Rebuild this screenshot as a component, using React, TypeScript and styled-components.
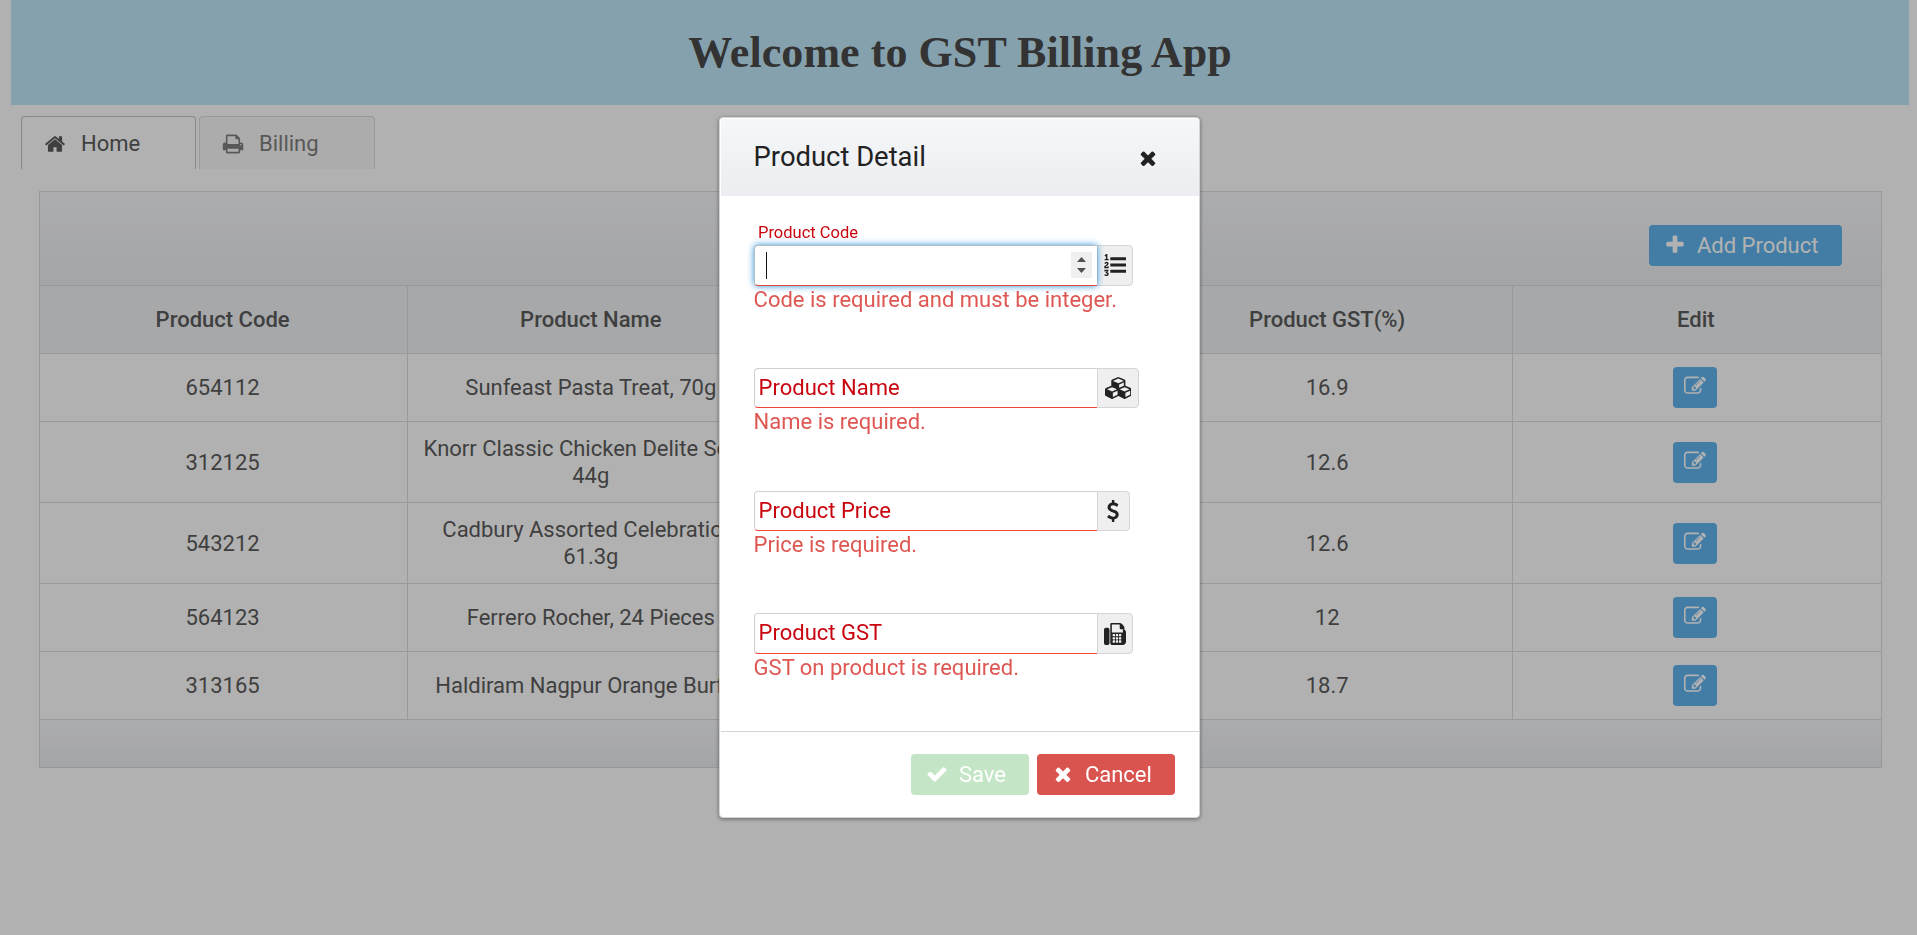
import React from "react";
import styled, { createGlobalStyle, css } from "styled-components";

const GlobalStyle = createGlobalStyle`
  *, *::before, *::after { box-sizing: border-box; }
  html, body { margin: 0; height: 100%; overflow: hidden; background: #fefefe; }
  body { font-family: Roboto, "Liberation Sans", sans-serif; font-size: 22px; line-height: 27px; color: #5b5b5b; }
  button, input { font: inherit; letter-spacing: inherit; margin: 0; }
`;

/* ---------- icons ---------- */

const faxKeys = [768, 1024, 1280]
  .map((x) =>
    [896, 1152, 1408]
      .map((y) => `M${x - 32} ${y}h128q32 0 32 32v128q0 32-32 32h-128q-32 0-32-32v-128q0-32 32-32z`)
      .join("")
  )
  .join("");

const icons = {
  home: {
    width: 1792,
    d: "M1472 992v480q0 26-19 45t-45 19h-384v-384h-256v384h-384q-26 0-45-19t-19-45v-480q0-1 .5-3t.5-3l575-474 575 474q1 2 1 6zm223-69l-62 74q-8 9-21 11h-3q-13 0-21-7l-692-577-692 577q-12 8-24 7-13-2-21-11l-62-74q-8-10-7-23.5t11-21.5l719-599q32-26 76-26t76 26l244 204v-195q0-14 9-23t23-9h192q14 0 23 9t9 23v408l219 182q10 8 11 21.5t-7 23.5z",
  },
  print: {
    width: 1792,
    d: "M448 1536h896v-256h-896v256zm0-640h896v-384h-160q-40 0-68-28t-28-68v-160h-640v640zm1152 64q0-26-19-45t-45-19-45 19-19 45 19 45 45 19 45-19 19-45zm128 0v416q0 13-9.5 22.5t-22.5 9.5h-224v160q0 40-28 68t-68 28h-960q-40 0-68-28t-28-68v-160h-224q-13 0-22.5-9.5t-9.5-22.5v-416q0-79 56.5-135.5t135.5-56.5h64v-544q0-40 28-68t68-28h672q40 0 88 20t76 48l152 152q28 28 48 76t20 88v256h64q79 0 135.5 56.5t56.5 135.5z",
  },
  plus: {
    width: 1792,
    d: "M1600 736v192q0 40-28 68t-68 28h-416v416q0 40-28 68t-68 28h-192q-40 0-68-28t-28-68v-416h-416q-40 0-68-28t-28-68v-192q0-40 28-68t68-28h416v-416q0-40 28-68t68-28h192q40 0 68 28t28 68v416h416q40 0 68 28t28 68z",
  },
  edit: {
    width: 1792,
    d: "M888 1184l116-116-152-152-116 116v56h96v96h56zm440-720q-16-16-33 1l-350 350q-17 17-1 33t33-1l350-350q17-17 1-33zm80 594v190q0 119-84.5 203.5t-203.5 84.5h-832q-119 0-203.5-84.5t-84.5-203.5v-832q0-119 84.5-203.5t203.5-84.5h832q63 0 117 25 15 7 18 23 3 17-9 29l-49 49q-14 14-32 8-23-6-45-6h-832q-66 0-113 47t-47 113v832q0 66 47 113t113 47h832q66 0 113-47t47-113v-126q0-13 9-22l64-64q15-15 35-7t20 29zm-96-738l288 288-672 672h-288v-288zm444 132l-92 92-288-288 92-92q28-28 68-28t68 28l152 152q28 28 28 68t-28 68z",
  },
  check: {
    width: 1792,
    d: "M1671 566q0 40-28 68l-724 724-136 136q-28 28-68 28t-68-28l-136-136-362-362q-28-28-28-68t28-68l136-136q28-28 68-28t68 28l294 295 656-657q28-28 68-28t68 28l136 136q28 28 28 68z",
  },
  close: {
    width: 1792,
    d: "M1490 1322q0 40-28 68l-136 136q-28 28-68 28t-68-28l-294-294-294 294q-28 28-68 28t-68-28l-136-136q-28-28-28-68t28-68l294-294-294-294q-28-28-28-68t28-68l136-136q28-28 68-28t68 28l294 294 294-294q28-28 68-28t68 28l136 136q28 28 28 68t-28 68l-294 294 294 294q28 28 28 68z",
  },
  listOl: {
    width: 1792,
    d: "M381 1620q0 80-54.5 126t-135.5 46q-106 0-172-66l57-88q49 45 106 45 29 0 50.5-14.5t21.5-42.5q0-64-105-56l-26-56q8-10 32.5-43.5t42.5-54 37-38.5v-1q-16 0-48.5 1t-48.5 1v53h-106v-152h333v88l-95 115q51 12 81 49t30 88zm2-627v159h-362q-6-36-6-54 0-51 23.5-93t56.5-68 66-47.5 56.5-43.5 23.5-45q0-25-14.5-38.5t-39.5-13.5q-46 0-81 58l-85-59q24-51 71.5-79.5t105.5-28.5q73 0 123 41.5t50 112.5q0 50-34 91.5t-75 64.5-75.5 50.5-35.5 52.5h127v-60h105zm1409 319v192q0 13-9.5 22.5t-22.5 9.5h-1216q-13 0-22.5-9.5t-9.5-22.5v-192q0-14 9-23t23-9h1216q13 0 22.5 9.5t9.5 22.5zm-1408-899v99h-335v-99h107q0-41 .5-121.5t.5-121.5v-12h-2q-8 17-50 54l-71-76 136-127h106v404h108zm1408 387v192q0 13-9.5 22.5t-22.5 9.5h-1216q-13 0-22.5-9.5t-9.5-22.5v-192q0-14 9-23t23-9h1216q13 0 22.5 9.5t9.5 22.5zm0-512v192q0 13-9.5 22.5t-22.5 9.5h-1216q-13 0-22.5-9.5t-9.5-22.5v-192q0-13 9.5-22.5t22.5-9.5h1216q13 0 22.5 9.5t9.5 22.5z",
  },
  cubes: {
    width: 2176,
    d: "M640 1632l384-192v-314l-384 164v342zm-64-454l404-173-404-173-404 173zm1088 454l384-192v-314l-384 164v342zm-64-454l404-173-404-173-404 173zm-448-293l384-165v-266l-384 164v267zm-64-379l441-189-441-189-441 189zm1088 518v416q0 36-19 67t-52 47l-448 224q-25 14-57 14t-57-14l-448-224q-5-2-7-4-2 2-7 4l-448 224q-25 14-57 14t-57-14l-448-224q-33-16-52-47t-19-67v-416q0-38 21.5-70t56.5-48l434-186v-400q0-38 21.5-70t56.5-48l448-192q23-10 50-10t50 10l448 192q35 16 56.5 48t21.5 70v400l434 186q36 16 57 48t21 70z",
  },
  dollar: {
    width: 1792,
    d: "M1362 1185q0 153-99.5 263.5t-258.5 136.5v175q0 14-9 23t-23 9h-135q-13 0-22.5-9.5t-9.5-22.5v-175q-66-9-127.5-31t-101.5-44.5-74-48-46.5-37.5-17.5-18q-17-21-2-41l103-135q7-10 23-12 15-2 24 9l2 2q113 99 243 125 37 8 74 8 81 0 142.5-43t61.5-122q0-28-15-53t-33.5-42-58.5-37.5-66-32-80-32.5q-39-16-61.5-25t-61.5-26.5-62.5-31-56.5-35.5-53.5-42.5-43.5-49-35.5-58-21-66.5-8.5-78q0-138 98-242t255-134v-180q0-13 9.5-22.5t22.5-9.5h135q14 0 23 9t9 23v176q57 6 110.5 23t87 33.5 63.5 37.5 39 29 15 14q17 18 5 38l-81 146q-8 15-23 16-14 3-27-7-3-3-14.5-12t-39-26.5-58.5-32-74.5-26-85.5-11.5q-95 0-155 43t-60 111q0 26 8.5 48t29.5 41.5 39.5 33 56 31 60.5 27 70 27.5q53 20 81 31.5t76 35 75.5 42.5 62 50 53 63.5 31.5 76.5 13 94z",
  },
  fax: {
    width: 1792,
    d:
      "M288 384q66 0 113 47t47 113v1088q0 66-47 113t-113 47h-128q-66 0-113-47t-47-113v-1088q0-66 47-113t113-47h128zm1376 163q58 34 93 93t35 128v768q0 106-75 181t-181 75h-864q-66 0-113-47t-47-113v-1536q0-40 28-68t68-28h672q40 0 88 20t76 48l152 152q28 28 48 76t20 88v163zM1536 768v-256h-160q-40 0-68-28t-28-68v-288h-640v640h896z" +
      faxKeys,
  },
};

type IconName = keyof typeof icons;

const Glyph = styled.svg`
  display: block;
  flex: none;
  height: 22px;
  fill: currentColor;
`;

const Icon = ({ name }: { name: IconName }) => {
  const { width, d } = icons[name];
  return (
    <Glyph viewBox={`0 0 ${width} 1792`} width={(width / 1792) * 22} aria-hidden>
      <path d={d} fillRule="evenodd" />
    </Glyph>
  );
};

/* ---------- page ---------- */

const Page = styled.main`
  height: 935px;
  padding: 0 8px 0 11px;
  overflow: hidden;
`;

const Banner = styled.header`
  display: flex;
  align-items: center;
  justify-content: center;
  height: 105px;
  background: #c1e7f9;
`;

const BannerTitle = styled.h1`
  margin: 0;
  font: bold 44px/50px "Liberation Serif", serif;
  letter-spacing: 0.06px;
  color: #494949;
`;

const Tabs = styled.nav`
  display: flex;
  gap: 3px;
  padding: 11px 0 0 10px;
`;

const Tab = styled.a<{ $active?: boolean }>`
  display: flex;
  align-items: center;
  gap: 15px;
  width: ${(p) => (p.$active ? 175 : 176)}px;
  height: 53px;
  padding: 1px 0 0 22px;
  border: 1px solid ${(p) => (p.$active ? "#c5c5c5" : "#dcdcdc")};
  border-bottom: 0;
  border-radius: 4px 4px 0 0;
  background: ${(p) => (p.$active ? "#fefefe" : "#f6f6f6")};
  color: ${(p) => (p.$active ? "#5b5b5b" : "#7f7f7f")};
`;

const barGradient = css`
  background: linear-gradient(to bottom, #f6f7f9 0%, #ebedf0 100%);
`;

const Table = styled.section`
  width: 1843px;
  margin: 22px 0 0 28px;
  border: 1px solid #dcdcdc;
`;

const TableToolbar = styled.div`
  ${barGradient}
  display: flex;
  justify-content: flex-end;
  height: 93px;
  padding: 33px 39px 0 0;
`;

const Row = styled.div<{ $head?: boolean; $tall?: boolean }>`
  display: grid;
  grid-template-columns: repeat(5, 1fr);
  height: ${(p) => (p.$tall ? 81 : 68)}px;
  border-top: 1px solid #dcdcdc;
  ${(p) =>
    p.$head &&
    css`
      background: #eff1f3;
      font-weight: 500;
    `}
`;

const Cell = styled.div`
  display: flex;
  align-items: center;
  justify-content: center;
  padding: 0 15px 0 13px;
  text-align: center;
  white-space: pre-line;
  border-right: 1px solid #dcdcdc;
  &:last-child {
    border-right: 0;
  }
`;

const TableFooter = styled.div`
  ${barGradient}
  height: 48px;
  border-top: 1px solid #dcdcdc;
`;

const tones = { primary: "#61b4ed", success: "#c5e6c6", danger: "#d9534f" };

const Button = styled.button<{ $tone: keyof typeof tones; $width: number }>`
  display: flex;
  align-items: center;
  gap: 10.5px;
  width: ${(p) => p.$width}px;
  height: 41px;
  padding: 0 0 1px 15.4px;
  border: 0;
  border-radius: 4px;
  background: ${(p) => tones[p.$tone]};
  color: #fff;
  font-weight: 400;
`;

const EditButton = styled(Button)`
  padding: 0 0 3px 11px;
  margin-right: 1px;
`;

/* ---------- dialog ---------- */

const Overlay = styled.div`
  position: fixed;
  inset: 0;
  display: flex;
  align-items: flex-start;
  padding: 117px 0 0 719px;
  background: rgba(0, 0, 0, 0.3);
`;

const Dialog = styled.div`
  display: flex;
  flex-direction: column;
  width: 481px;
  height: 701px;
  padding: 1px 0 0 1px;
  border: 1px solid #d5d5d5;
  border-radius: 4px;
  background: #fff;
  color: #222;
  box-shadow: 0 1px 4px rgba(0, 0, 0, 0.45);
`;

const DialogHeader = styled.div`
  ${barGradient}
  display: flex;
  flex: none;
  align-items: center;
  justify-content: space-between;
  height: 77px;
  padding: 0 40px 0 32.6px;
`;

const DialogTitle = styled.h2`
  margin: 0;
  font-size: 27.4px;
  font-weight: 400;
  line-height: 33px;
`;

const CloseButton = styled.button`
  padding: 0;
  border: 0;
  background: none;
  color: #222;
`;

const DialogBody = styled.div`
  flex: 1;
  min-height: 0;
  padding: 49.2px 0 0 32.6px;
`;

const Field = styled.div`
  position: relative;
  height: 122.7px;
`;

const InputGroup = styled.div`
  display: flex;
  height: 40.6px;
`;

const InputBox = styled.div<{ $focused?: boolean }>`
  display: flex;
  align-items: center;
  justify-content: space-between;
  width: 343.4px;
  padding: 0 5px 0 11px;
  border: 1px solid #d0d0d0;
  border-right: 0;
  border-bottom-color: #f44336;
  border-radius: 4px 0 0 4px;
  background: #fff;
  ${(p) =>
    p.$focused &&
    css`
      z-index: 1;
      border-color: #b5bcc2 #b5bcc2 #e5473d;
      box-shadow: 0 0 7px #2b94d9;
    `}
`;

const Caret = styled.span`
  width: 1px;
  height: 27px;
  background: #111;
`;

const Spinner = styled.span`
  display: flex;
  align-items: center;
  justify-content: center;
  width: 21px;
  height: 26px;
  background: #efefef;
`;

const Addon = styled.span<{ $width: number }>`
  display: flex;
  align-items: center;
  justify-content: center;
  width: ${(p) => p.$width}px;
  border: 1px solid #d5d5d5;
  border-radius: 0 4px 4px 0;
  background: #efefef;
`;

const FloatLabel = styled.label<{ $raised?: boolean }>`
  position: absolute;
  left: ${(p) => (p.$raised ? 4.4 : 5)}px;
  top: ${(p) => (p.$raised ? -23 : 6)}px;
  font-size: ${(p) => (p.$raised ? 16.5 : 22)}px;
  line-height: ${(p) => (p.$raised ? 22 : 27)}px;
  color: #c9050f;
  z-index: 2;
`;

const ErrorText = styled.div`
  color: #de5752;
`;

const DialogFooter = styled.div`
  display: flex;
  flex: none;
  justify-content: flex-end;
  gap: 8px;
  height: 86px;
  padding: 22px 24px 0 0;
  border-top: 1px solid #d5d5d5;
`;

const products = [
  { code: "654112", name: "Sunfeast Pasta Treat, 70g", price: "10", gst: "16.9" },
  { code: "312125", name: "Knorr Classic Chicken Delite Soup,\n44g", price: "55", gst: "12.6" },
  { code: "543212", name: "Cadbury Assorted Celebration,\n61.3g", price: "50", gst: "12.6" },
  { code: "564123", name: "Ferrero Rocher, 24 Pieces", price: "799", gst: "12" },
  { code: "313165", name: "Haldiram Nagpur Orange Burfi 1", price: "160", gst: "18.7" },
];

const columns = ["Product Code", "Product Name", "Product Price", "Product GST(%)", "Edit"];

const fields: { label: string; error: string; icon: IconName; addon: number; focused?: boolean }[] = [
  { label: "Product Code", error: "Code is required and must be integer.", icon: "listOl", addon: 36, focused: true },
  { label: "Product Name", error: "Name is required.", icon: "cubes", addon: 42 },
  { label: "Product Price", error: "Price is required.", icon: "dollar", addon: 33 },
  { label: "Product GST", error: "GST on product is required.", icon: "fax", addon: 36 },
];

export default function App() {
  return (
    <>
      <GlobalStyle />
      <Page>
        <Banner>
          <BannerTitle>Welcome to GST Billing App</BannerTitle>
        </Banner>
        <Tabs>
          <Tab $active>
            <Icon name="home" />
            Home
          </Tab>
          <Tab>
            <Icon name="print" />
            Billing
          </Tab>
        </Tabs>
        <Table>
          <TableToolbar>
            <Button $tone="primary" $width={193}>
              <Icon name="plus" />
              Add Product
            </Button>
          </TableToolbar>
          <Row $head>
            {columns.map((c) => (
              <Cell key={c}>{c}</Cell>
            ))}
          </Row>
          {products.map((p) => (
            <Row key={p.code} $tall={p.name.includes("\n")}>
              <Cell>{p.code}</Cell>
              <Cell>{p.name}</Cell>
              <Cell>{p.price}</Cell>
              <Cell>{p.gst}</Cell>
              <Cell>
                <EditButton $tone="primary" $width={44} aria-label="Edit">
                  <Icon name="edit" />
                </EditButton>
              </Cell>
            </Row>
          ))}
          <TableFooter />
        </Table>
      </Page>
      <Overlay>
        <Dialog role="dialog">
          <DialogHeader>
            <DialogTitle>Product Detail</DialogTitle>
            <CloseButton aria-label="Close">
              <Icon name="close" />
            </CloseButton>
          </DialogHeader>
          <DialogBody>
            {fields.map((f) => (
              <Field key={f.label}>
                <FloatLabel $raised={f.focused}>{f.label}</FloatLabel>
                <InputGroup>
                  <InputBox $focused={f.focused}>
                    {f.focused && (
                      <>
                        <Caret />
                        <Spinner>
                          <svg width="9" height="16" viewBox="0 0 9 16" fill="#505050">
                            <path d="M0 5L4.5 0L9 5zM0 11L4.5 16L9 11z" />
                          </svg>
                        </Spinner>
                      </>
                    )}
                  </InputBox>
                  <Addon $width={f.addon}>
                    <Icon name={f.icon} />
                  </Addon>
                </InputGroup>
                <ErrorText>{f.error}</ErrorText>
              </Field>
            ))}
          </DialogBody>
          <DialogFooter>
            <Button $tone="success" $width={118}>
              <Icon name="check" />
              Save
            </Button>
            <Button $tone="danger" $width={138}>
              <Icon name="close" />
              Cancel
            </Button>
          </DialogFooter>
        </Dialog>
      </Overlay>
    </>
  );
}
